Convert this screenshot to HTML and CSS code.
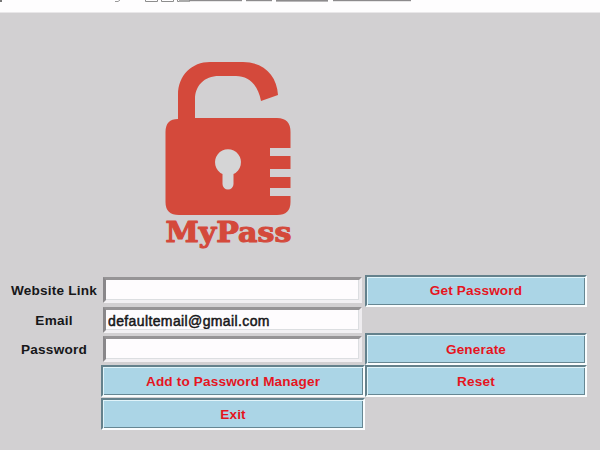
FILE: index.html
```html
<!DOCTYPE html>
<html lang="en">
<head>
<meta charset="utf-8">
<title>MyPass</title>
<link rel="stylesheet" href="styles.css">
</head>
<body>
<header class="strip">
  <svg width="600" height="12" viewBox="0 0 600 12" fill="none">
    <rect width="2" height="2" fill="#777"/>
    <path d="M115 1.500h3l2-1.500" stroke="#999"/>
    <path d="M145.500 0v1.500h12V0M161.500 0v1.500h12V0M177.500 0v1.500h12V0" stroke="#8d8d8d"/>
    <rect x="179" width="10" height="2" fill="#aaa"/>
    <g class="smudge" fill="#8c8a8c">
      <rect x="190" y="-2" width="52" height="3.200"/>
      <rect x="246" y="-2" width="26" height="3.200"/>
      <rect x="276" y="-2" width="52" height="3.600"/>
      <rect x="333" y="-2" width="78" height="3.200"/>
    </g>
  </svg>
</header>
<main class="window">
  <svg class="logo" width="140" height="200" viewBox="158 55 140 200">
    <path fill="#d4493b" d="M178 119V95C178 75 192 62 210 62H243C263 62 277 75 278 95L261 101C258 84 248 76 236 76H219C204 76 195 86 195 99V118H277Q290.500 118 290.500 132V148H270V156H290.500V169H270V177H290.500V188H270V196H290.500V202Q290.500 215 277 215H179Q165.500 215 165.500 202V132Q165.500 119 178 119Z"/>
    <path fill="#d5d5d6" d="M222.500 174A13 13 0 1 1 233.500 174V184A5.500 5.500 0 0 1 222.500 184Z"/>
    <text class="brand" x="165.500" y="241.500" textLength="126" lengthAdjust="spacingAndGlyphs">MyPass</text>
  </svg>
  <form class="form">
    <label class="label raised" for="site">Website Link</label>
    <input class="entry first" id="site" type="text">
    <button class="button raised" type="button">Get Password</button>
    <label class="label" for="email">Email</label>
    <input class="entry" id="email" type="text" value="defaultemail@gmail.com">
    <span></span>
    <label class="label" for="password">Password</label>
    <input class="entry" id="password" type="text">
    <button class="button" type="button">Generate</button>
    <span></span>
    <button class="button" type="button">Add to Password Manager</button>
    <button class="button" type="button">Reset</button>
    <span></span>
    <button class="button" type="button">Exit</button>
  </form>
</main>
</body>
</html>
```
FILE: styles.css
```css
* { box-sizing: border-box; }
body {
  margin: 0;
  height: 450px;
  overflow: hidden;
  background: #d2d0d2;
  font-family: "Liberation Sans", Arial, sans-serif;
}
.strip {
  height: 13px;
  background: #fefdfe;
  border-bottom: 1px solid #e9e7e9;
}
.strip svg { display: block; }
.smudge { filter: blur(0.7px); }
.window { padding-top: 42px; }
.logo { display: block; margin-left: 158px; }
.brand {
  font: bold 28px "DejaVu Serif", serif;
  fill: #d4493b;
  stroke: #d4493b;
  stroke-width: 1.1px;
  stroke-linejoin: round;
}
.form {
  display: grid;
  grid-template-columns: 94px 264px 222px;
  grid-template-rows: 32px 26px 32px 32px 33px;
  align-items: center;
  margin: 20px 0 0 7px;
}
.label {
  padding-top: 1px;
  text-align: center;
  color: #171719;
  font-weight: bold;
  font-size: 13.6px;
  letter-spacing: 0.2px;
  white-space: nowrap;
}
.entry {
  width: 259px;
  height: 26px;
  margin-left: 2px;
  padding: 1px 0 0 2px;
  border: 3px solid;
  border-color: #969496 #eeecef #f2f0f3 #89878a;
  border-radius: 0;
  outline: 0;
  background: #fefcfe;
  color: #171719;
  font: 14px "Liberation Sans", Arial, sans-serif;
  letter-spacing: 0.38px;
  -webkit-text-stroke: 0.5px #171719;
  box-shadow: inset -1px -1px #dcdee1;
}
.first { margin-bottom: 2px; }
.button {
  height: 32px;
  width: 100%;
  padding: 1px 0 0;
  border: 2px solid;
  border-color: #64818c #fafdfe #fafdfe #64818c;
  border-radius: 0;
  background: #abd5e6;
  color: #e5151f;
  font: bold 13.6px "Liberation Sans", Arial, sans-serif;
  letter-spacing: 0.15px;
  box-shadow: inset 1px 1px #e0f4fa, inset -1px -1px #668793;
}
.raised { padding: 0 0 1px; }
```
